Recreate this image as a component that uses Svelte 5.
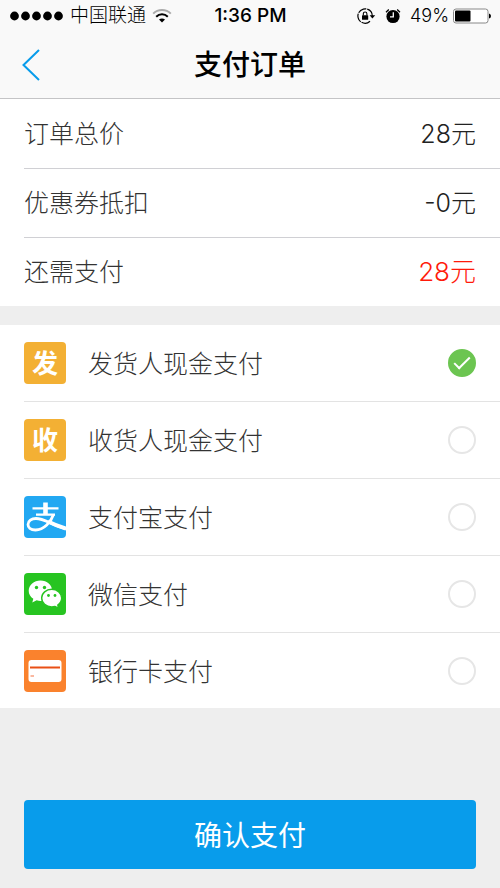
<script lang="ts">
  type Method = {
    id: string;
    label: string;
    badge?: string;
  };

  const summary = [
    { label: '订单总价', value: '28元' },
    { label: '优惠券抵扣', value: '-0元' },
    { label: '还需支付', value: '28元', due: true }
  ];

  const methods: Method[] = [
    { id: 'sender', label: '发货人现金支付', badge: '发' },
    { id: 'receiver', label: '收货人现金支付', badge: '收' },
    { id: 'alipay', label: '支付宝支付' },
    { id: 'wechat', label: '微信支付' },
    { id: 'card', label: '银行卡支付' }
  ];

  let selected = $state('sender');
</script>

<div class="page">
  <header class="header">
    <div class="status-bar">
      <div class="status-left">
        <svg class="signal" width="54" height="12" viewBox="0 0 54 12" aria-hidden="true">
          {#each [0, 1, 2, 3, 4] as dot}
            <circle cx={4.5 + dot * 11} cy="6" r="4.4" />
          {/each}
        </svg>
        <span class="carrier">中国联通</span>
        <svg width="20" height="16" viewBox="0 0 20 16" fill="none" aria-hidden="true">
          <path d="M1.2 5.6C6 .8 14 .8 18.800 5.600" stroke="#aaa" stroke-width="2" />
          <path d="M4.200 8.700c3.300-3.200 8.300-3.200 11.600 0" stroke="#000" stroke-width="2" />
          <path d="M7 11.600c1.700-1.500 4.300-1.500 6 0l-3 3z" fill="#000" />
        </svg>
      </div>
      <span class="time">1:36 PM</span>
      <div class="status-right">
        <svg width="19" height="16" viewBox="0 0 19 16" fill="none" stroke="#000" aria-hidden="true">
          <path d="M15.300 8A7.200 7.200 0 1 0 13 13.300" stroke-width="1.200" stroke-dasharray="9 1" />
          <path d="M12.600 7.200h5.600l-2.800 3.300z" fill="#000" stroke="none" />
          <rect x="5" y="7.200" width="6.200" height="4.600" rx=".5" fill="#000" stroke="none" />
          <path d="M6.300 7.500V5.800a1.800 1.800 0 0 1 3.600 0v1.700" stroke-width="1.100" />
        </svg>
        <svg class="alarm" width="16" height="16" viewBox="0 0 16 16" fill="none" aria-hidden="true">
          <circle cx="8" cy="8.500" r="6.600" fill="#000" />
          <path d="M1 4.200 3.800 1.600M15 4.200l-2.800-2.600" stroke="#000" stroke-width="1.300" />
          <path d="M8.300 4.200v4.600H5" stroke="#fff" stroke-width="1.300" />
        </svg>
        <span class="percent">49%</span>
        <svg width="38" height="16" viewBox="0 0 38 16" aria-hidden="true">
          <rect x=".5" y="1" width="34.500" height="14" rx="2.500" fill="#fff" stroke="#888" />
          <rect x="2" y="2.500" width="15.500" height="11" rx="1" />
          <path d="M36 5.500q2 .5 2 2.500t-2 2.500z" />
        </svg>
      </div>
    </div>
    <nav class="nav">
      <button class="back" type="button" aria-label="返回">
        <svg width="18" height="32" viewBox="0 0 18 32" fill="none" aria-hidden="true">
          <path d="M17 1 1.500 16 17 31" stroke="#079ceb" stroke-width="2" />
        </svg>
      </button>
      <h1>支付订单</h1>
    </nav>
  </header>

  <dl class="summary">
    {#each summary as item}
      <div class="summary-row">
        <dt>{item.label}</dt>
        <dd class:due={item.due}>{item.value}</dd>
      </div>
    {/each}
  </dl>

  <form onsubmit={(e) => e.preventDefault()}>
    <div class="methods" role="radiogroup" aria-label="支付方式">
      {#each methods as method}
        <label class="method">
          <span class="icon {method.id}" aria-hidden="true">
            {#if method.badge}
              <span class="badge">{method.badge}</span>
            {:else if method.id === 'alipay'}
              <svg width="42" height="42" viewBox="0 0 42 42" fill="none" stroke="#fff">
                <path d="M8.500 12.300h26M12 18.700h19" stroke-width="2.200" />
                <path d="M21.500 6.500v12" stroke-width="4.600" />
                <path d="M29.500 18.500C27 26 20 34 11.500 34 6.500 34 4 31.500 4 28.500c0-3.500 3.500-6 8-6 8 0 15 6 30 10.500" stroke-width="2.800" />
                <path d="M24 25.500c5 2.500 10 4.700 18 7.200" stroke-width="4" />
              </svg>
            {:else if method.id === 'wechat'}
              <svg width="42" height="42" viewBox="0 0 42 42">
                <path d="M16.500 7.500C10 7.500 4.700 12 4.700 17.800c0 3.300 1.700 6.100 4.600 8L8.300 29.500l4.400-2.200c1.200.4 2.500.6 3.800.6 6.500 0 11.700-4.500 11.700-10.100S23 7.500 16.500 7.500z" fill="#fff" />
                <path d="M27.700 16.300c-5.600 0-10 3.900-10 8.800s4.400 8.800 10 8.800c1.200 0 2.300-.2 3.300-.5l3.700 1.800-.9-3.200c2.400-1.600 3.900-4.100 3.900-6.900 0-4.900-4.400-8.800-10-8.800z" fill="#fff" stroke="#27c421" stroke-width="1.400" />
                <g fill="#27c421">
                  <circle cx="12.500" cy="14.500" r="1.700" />
                  <circle cx="20.500" cy="14.500" r="1.700" />
                  <circle cx="24.500" cy="22.500" r="1.400" />
                  <circle cx="31" cy="22.500" r="1.400" />
                </g>
              </svg>
            {:else}
              <svg width="42" height="42" viewBox="0 0 42 42">
                <rect x="4.500" y="10" width="33" height="22" rx="3" fill="#fff" />
                <path d="M6 17.500h30" stroke="#e95016" stroke-width="2" />
                <path d="M6.500 26h3.500" stroke="#f8a080" stroke-width="1.300" />
              </svg>
            {/if}
          </span>
          <span class="method-name">{method.label}</span>
          <input type="radio" name="method" value={method.id} bind:group={selected} />
        </label>
      {/each}
    </div>

    <div class="actions">
      <button class="submit" type="submit">确认支付</button>
    </div>
  </form>
</div>

<style>
  :global(body) {
    background: #eee;
  }

  .page {
    font-family: Inter, 'Noto Sans CJK SC', sans-serif;
    font-weight: 300;
    color: #333;
  }

  .header {
    background: #f9f9f9;
    border-bottom: 1px solid #c4c4c6;
    color: #000;
  }

  .status-bar {
    display: grid;
    grid-template-columns: 1fr auto 1fr;
    align-items: center;
    height: 32px;
    padding: 0 9px 0 10px;
    font-size: 19px;
    line-height: 32px;
  }

  .status-left,
  .status-right {
    display: flex;
    align-items: center;
    gap: 6px;
  }

  .status-right {
    justify-content: flex-end;
    gap: 4px;
    font-size: 18px;
  }

  .alarm {
    margin: 0 5px;
  }

  .time {
    font-weight: 500;
  }

  .nav {
    display: grid;
    grid-template-columns: 64px 1fr 64px;
    align-items: center;
    height: 66px;
  }

  .back {
    display: flex;
    padding: 0 22px;
    border: 0;
    background: none;
    cursor: pointer;
  }

  h1 {
    margin: 0;
    font-size: 28px;
    font-weight: 500;
    line-height: 40px;
    text-align: center;
  }

  .summary {
    margin: 0 0 19px;
    padding: 1px 0 0 24px;
    background: #fff;
    font-size: 25px;
  }

  .summary-row {
    display: flex;
    align-items: center;
    justify-content: space-between;
    height: 68px;
    padding-right: 24px;
    border-bottom: 1px solid #d0d0d4;
    line-height: 34px;
  }

  .summary-row:last-child {
    border-bottom: 0;
  }

  dd {
    margin: 0;
    color: #222;
  }

  .due {
    color: #ff1a0a;
    font-size: 26px;
  }

  .methods {
    padding-left: 24px;
    background: #fff;
  }

  .method {
    display: flex;
    align-items: center;
    height: 76px;
    padding-right: 24px;
    border-bottom: 1px solid #e3e3e3;
    cursor: pointer;
  }

  .method:last-child {
    height: 75px;
    border-bottom: 0;
  }

  .icon {
    display: grid;
    place-items: center;
    width: 42px;
    height: 42px;
    border-radius: 4px;
    overflow: hidden;
    color: #fff;
  }

  .badge {
    padding-top: 2px;
    font-size: 26px;
    font-weight: 700;
    line-height: 40px;
  }

  .sender,
  .receiver {
    background: #f3b034;
  }

  .alipay {
    background: #22a8f2;
  }

  .wechat {
    background: #27c421;
  }

  .card {
    background: #fa822d;
  }

  .method-name {
    flex: 1;
    margin: 0 0 2px 22px;
    font-size: 25px;
  }

  input {
    display: grid;
    place-items: center;
    width: 28px;
    height: 28px;
    margin: 0;
    appearance: none;
    border: 2px solid #e6e6e6;
    border-radius: 50%;
    background: #fff;
    cursor: pointer;
  }

  input:checked {
    border-color: #6cc551;
    background: #6cc551;
  }

  input:checked::after {
    content: '';
    width: 6px;
    height: 14px;
    margin-bottom: 4px;
    border: solid #fff;
    border-width: 0 2px 2px 0;
    transform: rotate(45deg);
  }

  .actions {
    padding: 92px 24px 19px;
  }

  .submit {
    width: 100%;
    height: 69px;
    padding: 0 0 2px;
    border: 0;
    border-radius: 4px;
    background: #089ceb;
    color: #fff;
    font-family: inherit;
    font-size: 28px;
    font-weight: 400;
    cursor: pointer;
  }
</style>
